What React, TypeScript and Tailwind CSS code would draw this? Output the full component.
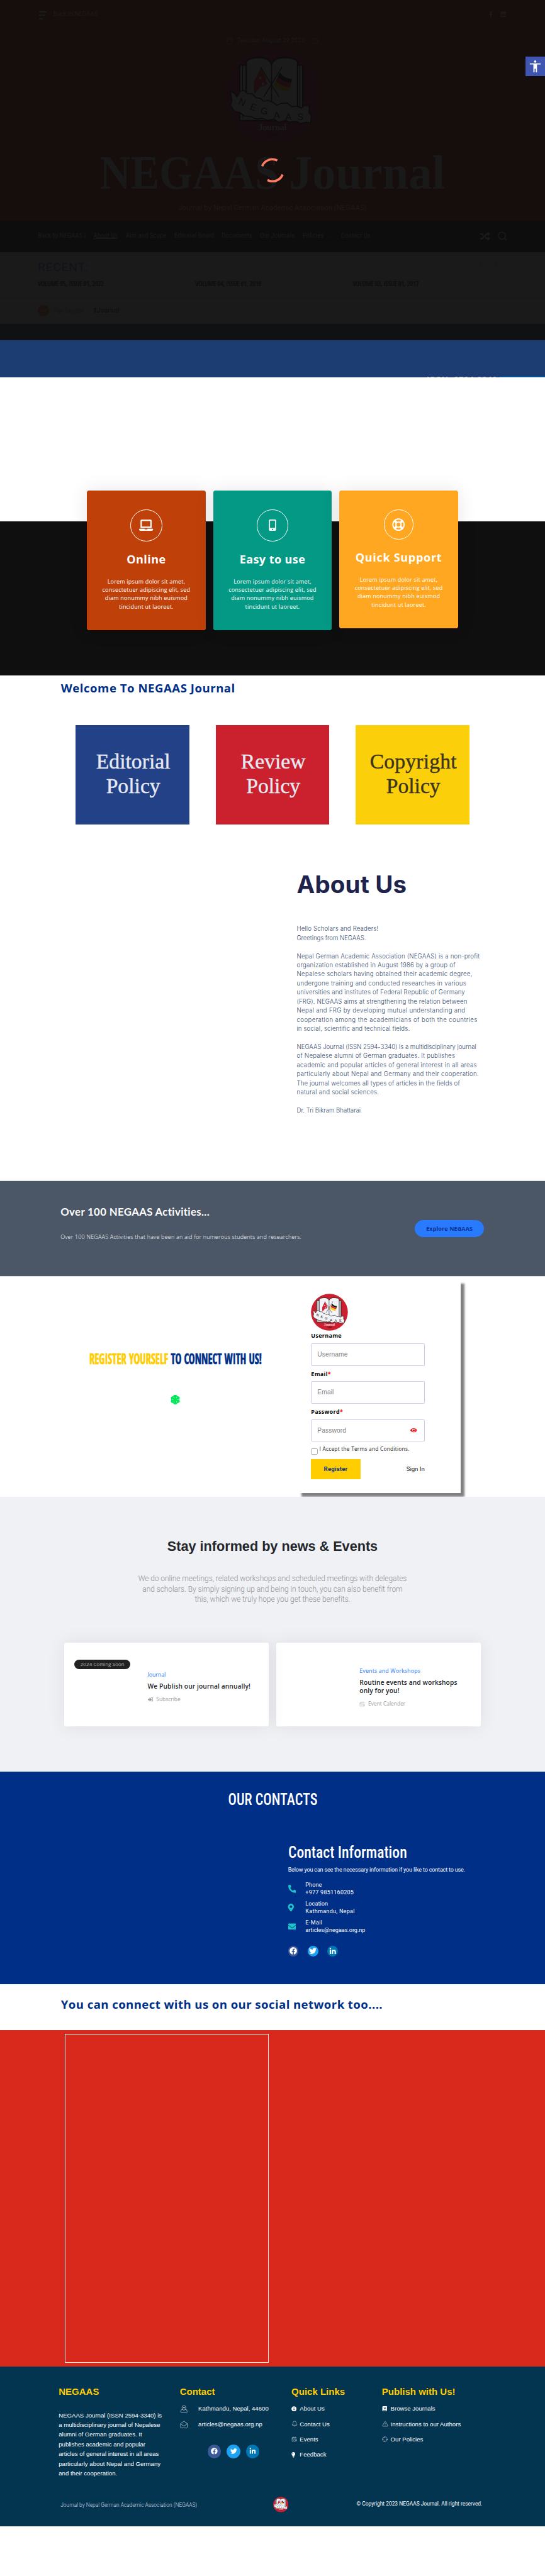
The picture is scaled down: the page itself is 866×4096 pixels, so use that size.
import React from "react";
import {
  FaEnvelope,
  FaEye,
  FaFacebook,
  FaFacebookF,
  FaInfoCircle,
  FaJournalWhills,
  FaLaptop,
  FaLightbulb,
  FaLinkedin,
  FaLinkedinIn,
  FaMapMarkerAlt,
  FaMobileAlt,
  FaPhoneAlt,
  FaRandom,
  FaRegLifeRing,
  FaSignInAlt,
  FaSnowflake,
  FaTwitter,
} from "react-icons/fa";
import { MdAccessibility } from "react-icons/md";
import {
  AlarmClock,
  Bell,
  Calendar,
  CalendarClock,
  ChevronDown,
  ChevronLeft,
  ChevronRight,
  Crosshair,
  MailOpen,
  MapPinned,
  Search,
  TrendingUp,
  TriangleAlert,
} from "lucide-react";

type Palette = {
  disc: string;
  paper: string;
  ink: string;
  red: string;
  gold: string;
  name: string;
};

const brand: Palette = {
  disc: "#cb2030",
  paper: "#f3f4f8",
  ink: "#111111",
  red: "#cf2233",
  gold: "#fbc90a",
  name: "#f6dcdc",
};

const dimmed: Palette = {
  disc: "#170d10",
  paper: "#1b1b1b",
  ink: "#0d0c0c",
  red: "#1d0d0e",
  gold: "#1c190b",
  name: "#1b1b1b",
};

function Logo({ palette, className }: { palette: Palette; className: string }) {
  const { disc, paper, ink, red, gold, name } = palette;
  const letters: [string, number, number, number][] = [
    ["N", 93, 222, 22],
    ["E", 127, 237, 20],
    ["G", 161, 249, 10],
    ["A", 200, 262, -4],
    ["A", 236, 267, -2],
    ["S", 272, 267, 4],
  ];
  return (
    <svg viewBox="40 43 294 294" className={className}>
      <circle cx="187" cy="190" r="146" fill={disc} />
      <path d="M86 98H280V270L86 268Z" fill={paper} stroke={ink} strokeWidth="4" />
      <path d="M95 98V262M271 98V262" stroke={ink} strokeWidth="2.5" />
      <path
        d="M106 240V88Q112 77 142 75Q176 74 184 96Q192 74 228 75Q258 77 264 88V240Q224 226 184 228Q146 226 106 240Z"
        fill={paper}
        stroke={ink}
        strokeWidth="4"
      />
      <path d="M184 96V222" stroke={ink} strokeWidth="3" />
      <path d="M150 108Q141 128 130 150Q128 170 132 186L150 163Q160 166 172 155Q164 148 168 140Q160 126 150 108Z" fill={red} />
      <circle cx="149" cy="137" r="4" fill={paper} />
      <circle cx="157" cy="156" r="4.5" fill={paper} />
      <path d="M209 121Q222 140 246 141L244 153Q218 150 203 135Z" fill={ink} />
      <path d="M203 135Q218 151 244 153L240 167Q212 162 197 148Z" fill={red} />
      <path d="M197 148Q212 163 240 167L235 180Q208 174 191 160Z" fill={gold} />
      <path d="M150 104L207 196M216 104L160 196" stroke={ink} strokeWidth="2.5" />
      <path
        d="M57 178L70 184L77 196L88 178L99 176L110 186L124 186L136 198L150 200L160 210L174 206L190 214L200 222L212 216L232 214L246 226L262 224L276 230L284 222L300 222L299 244L306 254L304 276L288 274L274 278L258 270L240 273L226 268L206 274L190 264L172 268L156 262L138 264L120 256L100 254L86 244L70 240L58 222L62 206Z"
        fill={paper}
        stroke={ink}
        strokeWidth="3"
      />
      {letters.map(([ch, x, y, r], i) => (
        <text
          key={i}
          x={x}
          y={y}
          transform={`rotate(${r} ${x} ${y - 8})`}
          textAnchor="middle"
          fontFamily="Liberation Sans"
          fontSize="29"
          fontWeight="500"
          fill={ink}
        >
          {ch}
        </text>
      ))}
      <text x="187" y="299" textAnchor="middle" fontFamily="Liberation Serif" fontSize="27" fontWeight="700" fill={name} textLength="86">
        Journal
      </text>
      <text x="187" y="318" textAnchor="middle" fontFamily="Liberation Serif" fontSize="19" fill={ink}>
        1986
      </text>
    </svg>
  );
}

function TopHeader() {
  return (
    <header className="relative flex h-[584px] flex-col items-center bg-[#160d0d] font-['Roboto'] text-[#1c1b1b]">
      <div className="mt-[22px] flex h-[31px] w-full items-center pr-[102px] pl-[103px]">
        <div className="mt-[6px] flex h-[21px] w-[21px] flex-col justify-between">
          <span className="h-[3px] w-[20px] bg-[#1c1b1b]" />
          <span className="h-[3px] w-[15px] bg-[#1c1b1b]" />
          <span className="h-[3px] w-[10px] bg-[#1c1b1b]" />
        </div>
        <span className="ml-[17px] text-[16px] tracking-[-0.15px]">Back to NEGAAS</span>
        <div className="ml-auto flex items-center gap-[17px]">
          <FaFacebookF size={16} />
          <FaLinkedin size={16} />
        </div>
      </div>
      <div className="mt-[39px] flex h-[31px] items-center text-[16px]">
        <Calendar size={19} strokeWidth={1.5} />
        <span className="ml-[11px]">Tuesday, August 29 2023</span>
        <AlarmClock size={20} strokeWidth={1.5} className="ml-[19px]" />
      </div>
      <Logo palette={dimmed} className="mt-px h-[253px] w-[253px]" />
      <h1 className="mt-[16px] flex h-[128px] w-[915px] font-['Liberation_Serif'] text-[128px] leading-[128px] font-bold text-[#191919]">
        <span className="w-[501px] origin-left scale-x-[0.889]">NEGAAS</span>
        <span className="origin-left scale-x-[0.967]">Journal</span>
      </h1>
      <p className="mt-[14px] text-[19px] leading-[28px]">Journal by Nepal German Academic Association (NEGAAS)</p>
      <svg viewBox="-33 -33 66 66" className="absolute top-[417px] left-[687px] h-[66px] w-[66px]" fill="none" stroke="#ff7c62" strokeWidth="6">
        <path d="M-27 -11A29 29 0 0 1 13 -26" />
        <path d="M27 11A29 29 0 0 1 -13 26" />
      </svg>
      <div className="absolute top-[150px] right-0 flex h-[52px] w-[52px] items-center justify-center bg-[#4054b2] text-white">
        <MdAccessibility size={38} />
      </div>
    </header>
  );
}

function NavBar() {
  return (
    <nav className="flex h-[83px] bg-[#0d0d0d] pr-[99px] pl-[100px] font-['Roboto_Condensed'] text-[18px] leading-[28px] text-[#1b1b1b]">
      <div className="mt-[27px] flex h-[28px] gap-[20.5px] whitespace-nowrap">
        <span>Back to NEGAAS |</span>
        <span className="underline underline-offset-2">About Us</span>
        <span className="tracking-[0.1px]">Aim and Scope</span>
        <span className="tracking-[0.05px]">Editorial Board</span>
        <span>Documents</span>
        <span className="tracking-[0.1px]">Our Journals</span>
        <span className="flex items-center gap-[12px]">
          Policies
          <ChevronDown size={13} strokeWidth={1.5} className="mt-[3px]" />
        </span>
        <span>Contact Us</span>
      </div>
      <div className="mt-[27px] ml-auto flex h-[28px] items-center gap-[18px]">
        <FaRandom size={26} />
        <Search size={28} strokeWidth={2} className="-scale-y-100 rotate-90" />
      </div>
    </nav>
  );
}

function Recent() {
  return (
    <section className="bg-[#1a1a1a] font-['Roboto']">
      <div className="h-[119px] px-[100px] pt-[20px]">
        <div className="flex justify-between pr-[20px] text-[#0f0f0f]">
          <h2 className="text-[31px] leading-[40px] tracking-[1.9px] text-[#11111a]">RECENT:</h2>
          <div className="flex h-[28px] items-center gap-[22px]">
            <ChevronLeft size={18} strokeWidth={1.2} />
            <ChevronRight size={18} strokeWidth={1.2} />
          </div>
        </div>
        <div className="mt-[10px] grid grid-cols-[416px_416px_auto] font-['Open_Sans_Condensed'] text-[18px] leading-[28px] font-bold tracking-[-0.67px] text-[#0e0e0e]">
          <span>VOLUME 05, ISSUE 01, 2022</span>
          <span>VOLUME 04, ISSUE 01, 2019</span>
          <span>VOLUME 03, ISSUE 01, 2017</span>
        </div>
      </div>
      <div className="flex h-[70px] items-center border-t border-[#171717] pl-[100px] font-['Roboto_Condensed'] text-[18px]">
        <span className="flex h-[30px] w-[30px] items-center justify-center rounded-full bg-[#1b120f] text-[#1f1a18]">
          <TrendingUp size={18} />
        </span>
        <span className="ml-[11px] text-[#14141b] italic">Top Tagged</span>
        <span className="ml-[25px] tracking-[0.8px] text-[#0d0d0d]">#Journal</span>
      </div>
    </section>
  );
}

function Hero() {
  return (
    <>
      <div className="h-[44px] bg-[#101113]" />
      <div className="relative h-[97px] overflow-hidden bg-[#1c3d72]">
        <div className="absolute right-0 bottom-0 h-[3px] w-[120px] border-t-2 border-[#1c3a80] bg-[#0b83d3]" />
        <span className="absolute top-[93px] left-[1128px] font-['Liberation_Sans'] text-[24px] leading-[24px] font-bold text-white/60">
          ISSN: 2594-3340
        </span>
      </div>
    </>
  );
}

const lorem = (
  <>
    Lorem ipsum dolor sit amet,
    <br />
    consectetuer adipiscing elit, sed
    <br />
    diam nonummy nibh euismod
    <br />
    tincidunt ut laoreet.
  </>
);

function Features() {
  return (
    <section className="h-[789px] bg-[linear-gradient(#fff_380px,#0f0f0f_380px)] pt-[300px] pl-[230px] text-center font-['Open_Sans'] text-white">
      <div className="grid grid-cols-[313px_314px_313px] items-start gap-[20px]">
        <div className="flex h-[369px] flex-col items-center rounded-[6px] bg-[#c04009] pt-[50px] shadow-[0_0_50px_rgba(0,0,0,0.1)]">
          <span className="flex h-[84px] w-[84px] items-center justify-center rounded-full border-2 border-white">
            <FaLaptop size={37} />
          </span>
          <h3 className="mt-[30px] text-[30px] leading-[36px] font-bold tracking-[0.77px]">Online</h3>
          <p className="mt-[29px] text-[15px] leading-[22.3px] tracking-[0.3px]">{lorem}</p>
        </div>
        <div className="flex h-[369px] flex-col items-center rounded-[6px] bg-[#049985] pt-[50px] shadow-[0_0_50px_rgba(0,0,0,0.1)]">
          <span className="flex h-[84px] w-[84px] items-center justify-center rounded-full border-2 border-white">
            <FaMobileAlt size={30} />
          </span>
          <h3 className="mt-[30px] text-[30px] leading-[36px] font-bold tracking-[0.69px]">Easy to use</h3>
          <p className="mt-[29px] text-[15px] leading-[22.3px] tracking-[0.3px]">{lorem}</p>
        </div>
        <div className="flex h-[364px] flex-col items-center rounded-[6px] bg-[#ffa720] pt-[50px] shadow-[0_0_50px_rgba(0,0,0,0.1)]">
          <span className="flex h-[79px] w-[79px] items-center justify-center rounded-full border-2 border-white">
            <FaRegLifeRing size={34} />
          </span>
          <h3 className="mt-[30px] text-[30px] leading-[36px] font-bold tracking-[1.15px]">Quick Support</h3>
          <p className="mt-[29px] text-[15px] leading-[22.3px] tracking-[0.3px]">{lorem}</p>
        </div>
      </div>
    </section>
  );
}

function Policies() {
  return (
    <section className="pt-[14px]">
      <h2 className="pl-[161px] font-['Open_Sans'] text-[31px] leading-[40px] font-bold tracking-[0.83px] text-[#002f87]">
        Welcome To NEGAAS Journal
      </h2>
      <div className="mt-[77px] grid grid-cols-3 gap-[70px] px-[200px] text-center font-['Liberation_Serif'] text-[56px] leading-[65px] text-[#e6e9f2] [-webkit-text-stroke:0.7px_currentColor]">
        <div className="h-[263px] bg-[#224187] pt-[63px] pl-[4px]">
          Editorial
          <br />
          Policy
        </div>
        <div className="h-[263px] bg-[#cb202e] pt-[63px] pl-[4px]">
          Review
          <br />
          Policy
        </div>
        <div className="h-[263px] bg-[#fbcf0a] pt-[63px] pl-[4px] text-[#3a3520]">
          <span className="tracking-[0.3px]">Copyright</span>
          <br />
          Policy
        </div>
      </div>
    </section>
  );
}

function About() {
  return (
    <section className="pt-[121px] pb-[172px] pl-[784px] font-['Inter'] whitespace-nowrap">
      <h2 className="text-[64px] leading-[76px] font-bold tracking-[0.3px] text-[#1d234b]">About Us</h2>
      <div className="mt-[68px] text-[16px] leading-[24px] font-light text-[#324a6d]">
        <p className="tracking-[0.24px]">Hello Scholars and Readers!</p>
        <p className="tracking-[-0.08px]">Greetings from NEGAAS.</p>
        <p className="mt-[24px] tracking-[0.32px]">Nepal German Academic Association (NEGAAS) is a non-profit</p>
        <p className="tracking-[0.4px]">organization established in August 1986 by a group of</p>
        <p className="tracking-[0.5px]">Nepalese scholars having obtained their academic degree,</p>
        <p className="tracking-[0.52px]">undergone training and conducted researches in various</p>
        <p className="tracking-[0.31px]">universities and institutes of Federal Republic of Germany</p>
        <p className="tracking-[0.25px]">(FRG). NEGAAS aims at strengthening the relation between</p>
        <p className="tracking-[0.5px]">Nepal and FRG by developing mutual understanding and</p>
        <p className="tracking-[0.71px]">cooperation among the academicians of both the countries</p>
        <p className="tracking-[0.24px]">in social, scientific and technical fields.</p>
        <p className="mt-[24px] tracking-[-0.04px]">NEGAAS Journal (ISSN 2594-3340) is a multidisciplinary journal</p>
        <p className="tracking-[0.37px]">of Nepalese alumni of German graduates. It publishes</p>
        <p className="tracking-[0.49px]">academic and popular articles of general interest in all areas</p>
        <p className="tracking-[0.55px]">particularly about Nepal and Germany and their cooperation.</p>
        <p className="tracking-[0.24px]">The journal welcomes all types of articles in the fields of</p>
        <p className="tracking-[0.43px]">natural and social sciences.</p>
        <p className="mt-[24px]">Dr. Tri Bikram Bhattarai</p>
      </div>
    </section>
  );
}

function Activities() {
  return (
    <section className="flex h-[254px] justify-between border-y border-[#dcdfe2] bg-[#4b5666] pr-[161px] pl-[160px]">
      <div className="pt-[63px] text-white">
        <h2 className="font-['Lato'] text-[28px] leading-[36px] font-bold tracking-[0.54px]">Over 100 NEGAAS Activities...</h2>
        <p className="mt-[38px] font-['Open_Sans'] text-[15px] leading-[24px] font-light tracking-[0.3px]">
          Over 100 NEGAAS Activities that have been an aid for numerous students and researchers.
        </p>
      </div>
      <button className="mt-[104px] h-[45px] w-[183px] rounded-full bg-[#287bff] font-['Open_Sans'] text-[15px] font-bold tracking-[0.18px] text-[#0b3190]">
        Explore NEGAAS
      </button>
    </section>
  );
}

function Field({ label, required, top, gap, eye }: { label: string; required?: boolean; top: string; gap: string; eye?: boolean }) {
  return (
    <label className={`block ${top}`}>
      <span className="block font-['Open_Sans'] text-[15px] leading-[20px] font-bold tracking-[0.5px] text-black">
        {label}
        {required && <span className="text-[#ff0000]">*</span>}
      </span>
      <span className={`flex h-[59px] items-center justify-between rounded-[3px] border border-[#ccccea] pr-[19px] pl-[15px] font-['Liberation_Sans'] text-[17px] tracking-[0.2px] text-[#818181] ${gap}`}>
        {label}
        {eye && <FaEye size={18} preserveAspectRatio="none" className="h-[14px] w-[18px] text-[#ff0000]" />}
      </span>
    </label>
  );
}

function Register() {
  return (
    <section className="flex h-[583px] overflow-hidden bg-white">
      <div className="flex w-[786px] flex-col pt-[195px] pl-[236px]">
        <h2 className="w-[640px] origin-left scale-x-[0.727] font-['Open_Sans_Condensed'] text-[38px] leading-[48px] font-bold whitespace-nowrap text-[#002f87] [-webkit-text-stroke:1.2px_currentColor]">
          <span className="text-[#ffcd00]">REGISTER YOURSELF</span> TO CONNECT WITH US!
        </h2>
        <FaSnowflake size={25} strokeWidth={36} stroke="currentColor" className="mt-[71px] ml-[215px] text-[#00e85a]" />
      </div>
      <div className="mt-[9px] h-[564px] w-[431px] bg-white pt-[37px] pl-[36px] shadow-[10px_10px_5px_#808080]">
        <div className="w-[300px]">
          <Logo palette={brand} className="h-[98px] w-[98px]" />
          <Field label="Username" top="mt-[3px]" gap="mt-[10px]" />
          <Field label="Email" required top="mt-[12px]" gap="mt-[9px]" />
          <Field label="Password" required eye top="mt-[12px]" gap="mt-[10px]" />
          <div className="mt-[10px] flex h-[24px] gap-[5px]">
            <span className="mt-[7px] h-[17px] w-[17px] rounded-[3px] border-2 border-[#adadad]" />
            <span className="font-['Open_Sans'] text-[14px] leading-[20px] tracking-[0.33px] text-[#1a1a1a]">I Accept the Terms and Conditions.</span>
          </div>
          <div className="mt-[12px] flex h-[54px] items-center justify-between font-['Roboto'] text-[16px]">
            <span className="flex h-[54px] w-[130px] items-center justify-center bg-[#ffcd00] font-bold tracking-[0.3px] text-[#0b3180]">Register</span>
            <span className="text-[#1a1a1a]">Sign In</span>
          </div>
        </div>
      </div>
    </section>
  );
}

function News() {
  return (
    <section className="h-[726px] bg-[#eff1f5] pt-[110px] font-['Open_Sans']">
      <h2 className="text-center font-['Liberation_Sans'] text-[36px] leading-[44px] font-bold text-[#23262a]">Stay informed by news &amp; Events</h2>
      <p className="mt-[48px] text-center font-['Roboto'] text-[20px] leading-[28px] font-light tracking-[-0.12px] text-[#909192]">
        We do online meetings, related workshops and scheduled meetings with delegates
        <br />
        and scholars. By simply signing up and being in touch, you can also benefit from
        <br />
        this, which we truly hope you get these benefits.
      </p>
      <div className="mt-[100px] grid grid-cols-2 gap-[20px] px-[170px]">
        <article className="relative h-[220px] rounded-[5px] bg-white pt-[75px] pl-[220px] shadow-[0_0_50px_rgba(0,0,0,0.08)]">
          <span className="absolute top-[45px] left-[26px] flex h-[24px] w-[149px] items-center justify-center rounded-full bg-[#222222] text-[13px] font-light tracking-[0.35px] text-white">
            2024 Coming Soon
          </span>
          <p className="text-[15px] leading-[20px] tracking-[-0.3px] text-[#2a7bfb]">Journal</p>
          <h3 className="mt-[9px] text-[17px] leading-[22px] font-semibold tracking-[0.17px] text-[#23262a]">We Publish our journal annually!</h3>
          <p className="mt-[13px] flex items-center gap-[9px] text-[14px] leading-[20px] text-[#9b9b9b]">
            <FaSignInAlt size={14} />
            Subscribe
          </p>
        </article>
        <article className="h-[220px] rounded-[5px] bg-white pt-[64px] pl-[220px] shadow-[0_0_50px_rgba(0,0,0,0.08)]">
          <p className="text-[15px] leading-[20px] tracking-[0.1px] text-[#2a7bfb]">Events and Workshops</p>
          <h3 className="mt-[10px] text-[17px] leading-[22px] font-semibold tracking-[0.2px] text-[#23262a]">
            Routine events and workshops
            <br />
            only for you!
          </h3>
          <p className="mt-[13px] flex items-center gap-[8px] text-[14px] leading-[20px] text-[#9b9b9b]">
            <CalendarClock size={15} strokeWidth={1.3} />
            Event Calender
          </p>
        </article>
      </div>
    </section>
  );
}

function Contacts() {
  return (
    <section className="h-[562px] bg-[#002f87] pt-[47px] text-white">
      <h2 className="text-center font-['Roboto_Condensed'] text-[44px] leading-[52px] font-medium">
        <span className="inline-block scale-x-[0.84]">OUR CONTACTS</span>
      </h2>
      <div className="mt-[87px] pl-[761px] font-['Roboto'] text-[15px]">
        <h3 className="origin-left scale-x-[0.895] font-['Roboto_Condensed'] text-[44px] leading-[52px] font-medium">Contact Information</h3>
        <p className="mt-[12px] leading-[20px] tracking-[-0.27px]">Below you can see the necessary information if you like to contact to use.</p>
        <ul className="mt-[22px] flex flex-col gap-[12px] leading-[19px]">
          <li className="flex">
            <FaPhoneAlt size={21} className="mt-[8px] mr-[25px] text-[#1cc4cc]" />
            <span>
              <span className="tracking-[0.2px]">Phone</span>
              <br />
              <span className="tracking-[0.4px]">+977 9851160205</span>
            </span>
          </li>
          <li className="flex">
            <FaMapMarkerAlt size={21} className="mt-[8px] mr-[28px] -ml-[3px] text-[#1cc4cc]" />
            <span>
              <span className="tracking-[0.2px]">Location</span>
              <br />
              <span className="tracking-[0.49px]">Kathmandu, Nepal</span>
            </span>
          </li>
          <li className="flex">
            <FaEnvelope size={21} className="mt-[8px] mr-[25px] text-[#1cc4cc]" />
            <span>
              <span className="tracking-[0.6px]">E-Mail</span>
              <br />
              articles@negaas.org.np
            </span>
          </li>
        </ul>
        <div className="mt-[31px] flex gap-[24px]">
          <span className="flex h-[28px] w-[28px] items-center justify-center rounded-full bg-[#3b5998]">
            <FaFacebook size={20} />
          </span>
          <span className="flex h-[28px] w-[28px] items-center justify-center rounded-full bg-[#1da1f2]">
            <FaTwitter size={20} />
          </span>
          <span className="flex h-[28px] w-[28px] items-center justify-center rounded-full bg-[#0077b5]">
            <FaLinkedinIn size={19} />
          </span>
        </div>
      </div>
    </section>
  );
}

function Social() {
  return (
    <>
      <section className="h-[121px] bg-white pt-[34px] pl-[161px]">
        <h2 className="font-['Open_Sans'] text-[31px] leading-[40px] font-bold tracking-[0.67px] text-[#002f87]">
          You can connect with us on our social network too....
        </h2>
      </section>
      <section className="h-[890px] bg-[#d9291c] pt-[11px] pl-[172px]">
        <div className="h-[869px] w-[538px] border-[3px] border-[#eeeeee] [border-style:groove]" />
      </section>
    </>
  );
}

function Footer() {
  return (
    <footer className="h-[422px] bg-[#033450] pt-[51px] font-['Liberation_Sans'] text-[16px] leading-[20px] text-white">
      <div className="grid h-[294px] grid-cols-[320px_295px_239px_auto] pl-[155px] whitespace-nowrap">
        <div>
          <h4 className="text-[25px] leading-[32px] font-bold text-[#ffcd00]">NEGAAS</h4>
          <p className="mt-[33px] leading-[25.7px]">
            NEGAAS Journal (ISSN 2594-3340) is
            <br />a multidisciplinary journal of Nepalese
            <br />
            alumni of German graduates. It
            <br />
            publishes academic and popular
            <br />
            articles of general interest in all areas
            <br />
            particularly about Nepal and Germany
            <br />
            and their cooperation.
          </p>
        </div>
        <div>
          <h4 className="text-[25px] leading-[32px] font-bold text-[#ffcd00]">Contact</h4>
          <ul className="mt-[19px] flex flex-col gap-[20.5px]">
            <li className="flex items-center">
              <MapPinned size={21} strokeWidth={1.1} className="mr-[28px]" />
              Kathmandu, Nepal, 44600
            </li>
            <li className="flex items-center">
              <MailOpen size={21} strokeWidth={1.1} className="mr-[28px]" />
              articles@negaas.org.np
            </li>
          </ul>
          <div className="mt-[42px] ml-[73px] flex gap-[15px]">
            <span className="flex h-[36px] w-[36px] items-center justify-center rounded-full bg-[#3b5998]">
              <FaFacebook size={18} />
            </span>
            <span className="flex h-[36px] w-[36px] items-center justify-center rounded-full bg-[#1da1f2]">
              <FaTwitter size={18} />
            </span>
            <span className="flex h-[36px] w-[36px] items-center justify-center rounded-full bg-[#0077b5]">
              <FaLinkedinIn size={18} />
            </span>
          </div>
        </div>
        <div>
          <h4 className="text-[25px] leading-[32px] font-bold text-[#ffcd00]">Quick Links</h4>
          <ul className="mt-[19px] flex flex-col gap-[20.6px]">
            <li className="flex items-center gap-[8px]">
              <FaInfoCircle size={14} />
              About Us
            </li>
            <li className="flex items-center gap-[5px]">
              <Bell size={17} strokeWidth={1.2} />
              Contact Us
            </li>
            <li className="flex items-center gap-[7px]">
              <CalendarClock size={15} strokeWidth={1.2} />
              Events
            </li>
            <li className="flex items-center gap-[10px]">
              <FaLightbulb size={14} className="-ml-[2px]" />
              Feedback
            </li>
          </ul>
        </div>
        <div>
          <h4 className="text-[25px] leading-[32px] font-bold text-[#ffcd00]">Publish with Us!</h4>
          <ul className="mt-[19px] flex flex-col gap-[20.6px]">
            <li className="flex items-center gap-[9px]">
              <FaJournalWhills size={14} />
              Browse Journals
            </li>
            <li className="flex items-center gap-[6px]">
              <TriangleAlert size={17} strokeWidth={1.2} />
              Instructions to our Authors
            </li>
            <li className="flex items-center gap-[8px]">
              <Crosshair size={15} strokeWidth={1.3} />
              Our Policies
            </li>
          </ul>
        </div>
      </div>
      <div className="flex font-['Roboto'] text-[14px]">
        <span className="mt-[12px] ml-[160px] w-[561px] font-light text-[#d5dde3]">Journal by Nepal German Academic Association (NEGAAS)</span>
        <Logo palette={brand} className="h-[41px] w-[41px]" />
        <span className="mt-[8px] ml-[180px]">© Copyright 2023 NEGAAS Journal. All right reserved.</span>
      </div>
    </footer>
  );
}

export default function App() {
  return (
    <div className="h-[6810px] w-[1440px] overflow-hidden bg-white [zoom:0.60139]">
      <TopHeader />
      <NavBar />
      <Recent />
      <Hero />
      <Features />
      <Policies />
      <About />
      <Activities />
      <Register />
      <News />
      <Contacts />
      <Social />
      <Footer />
    </div>
  );
}
